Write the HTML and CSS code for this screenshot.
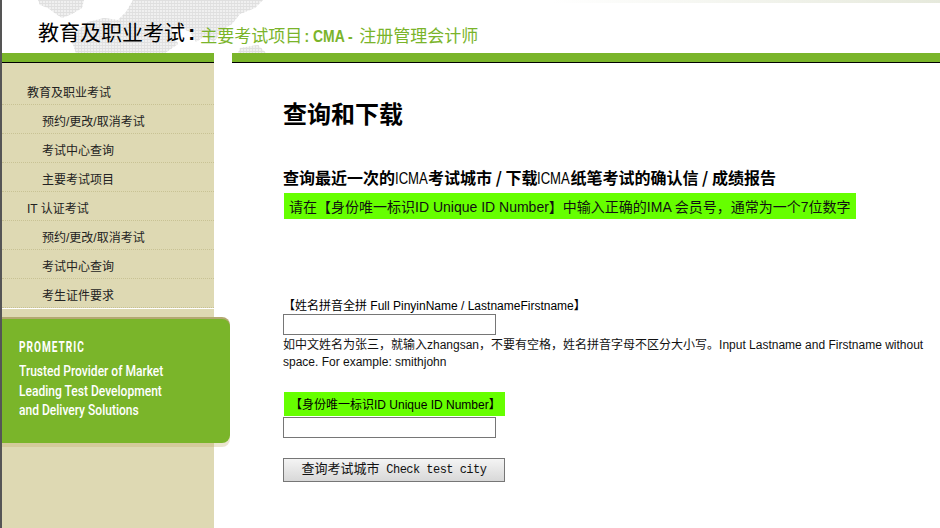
FILE: index.html
```html
<!DOCTYPE html>
<html lang="zh">
<head>
<meta charset="utf-8">
<title>查询和下载</title>
<link rel="stylesheet" href="styles.css">
</head>
<body>
<div class="page">
  <header class="header">
    <div class="map"></div>
    <div class="top-fade"></div>
    <h1 class="title"><span class="title-main">教育及职业考试</span><b class="colon">:</b><span class="subtitle">主要考试项目<span class="narrow">: CMA -</span>注册管理会计师</span></h1>
  </header>
  <div class="bars">
    <div class="bar bar-left"></div>
    <div class="bar bar-right"></div>
  </div>
  <div class="body">
    <aside class="sidebar">
      <nav class="menu">
        <a class="item">教育及职业考试</a>
        <a class="item sub">预约/更改/取消考试</a>
        <a class="item sub">考试中心查询</a>
        <a class="item sub">主要考试项目</a>
        <a class="item">IT 认证考试</a>
        <a class="item sub">预约/更改/取消考试</a>
        <a class="item sub">考试中心查询</a>
        <a class="item sub">考生证件要求</a>
      </nav>
      <div class="promo">
        <div class="promo-title">PROMETRIC</div>
        <div class="promo-text">Trusted Provider of Market<br>Leading Test Development<br>and Delivery Solutions</div>
      </div>
    </aside>
    <main class="content">
      <h2 class="heading">查询和下载</h2>
      <h3 class="subheading">查询最近一次的<span class="latin">ICMA</span>考试城市 / 下载<span class="latin">ICMA</span>纸笔考试的确认信 / 成绩报告</h3>
      <div class="notice">请在【身份唯一标识ID Unique ID Number】中输入正确的IMA 会员号，通常为一个7位数字</div>
      <form class="form">
        <label class="label" for="name">【姓名拼音全拼 Full PinyinName / LastnameFirstname】</label>
        <input class="field" id="name" type="text">
        <p class="hint">如中文姓名为张三，就输入zhangsan，不要有空格，姓名拼音字母不区分大小写。Input Lastname and Firstname without space. For example: smithjohn</p>
        <label class="label-green" for="uid">【身份唯一标识ID Unique ID Number】</label>
        <input class="field" id="uid" type="text">
        <button class="submit" type="button">查询考试城市<span class="mono"> Check test city</span></button>
      </form>
    </main>
  </div>
</div>
</body>
</html>
```
FILE: styles.css
```css
* { box-sizing: border-box; }
html, body { margin: 0; padding: 0; background: #fff; }
body { font-family: "Liberation Sans", "Noto Sans CJK TC", sans-serif; color: #000; overflow: hidden; }
.page { width: 940px; height: 528px; display: flex; flex-direction: column; overflow: hidden; border-left: 2px solid #555; }
.header { height: 53px; position: relative; padding: 16px 0 0 36px; }
.map { position: absolute; left: -2px; top: 0; width: 272px; height: 53px; background-color: #f0f0f0; background-image: linear-gradient(#dfdfdf 1px, transparent 1px), linear-gradient(90deg, #e2e2e2 1px, transparent 1px); background-size: 3px 3px; clip-path: path("M38 0H84L82 8L72 14L62 18L56 14L48 8L40 5Z M133 0H263L255 8L240 14L232 24L222 30L214 42L205 36L196 42L190 32L178 26L172 30L178 44L165 53H76L72 42L78 30L88 22L104 18L118 20L126 12Z M240 48L258 45L266 53H238Z"); }
.top-fade { position: absolute; left: 550px; right: 0; top: 0; height: 3px; background: linear-gradient(to right, #fff, #e6e9dc); }
.title { position: relative; margin: 0; font-size: 21px; line-height: 30px; font-weight: 400; white-space: nowrap; font-family: "Noto Sans CJK SC", sans-serif; display: flex; align-items: flex-start; }
.colon { font-family: "Liberation Sans", sans-serif; font-weight: 700; font-size: 22px; margin-left: 3px; margin-right: 5px; padding-top: 2px; }
.subtitle { font-size: 17px; color: #7ab42a; font-family: "Noto Sans CJK SC", sans-serif; white-space: pre; padding-top: 4px; }
.narrow { display: inline-block; width: 57px; padding-left: 3px; font-family: "Liberation Sans", sans-serif; font-weight: 700; transform: scaleX(.82); transform-origin: left center; }
.bars { display: flex; height: 10px; gap: 18px; }
.bar { background: #7ab52a; border-bottom: 1px solid #000; }
.bar-left { width: 212px; }
.bar-right { flex: 1; }
.body { display: flex; flex: 1; min-height: 0; }
.sidebar { width: 212px; flex: none; background: #ded9b3; position: relative; padding-top: 13px; }
.menu { display: flex; flex-direction: column; border-bottom: 1px solid #fff; }
.item { height: 29px; padding: 2px 0 0 25px; line-height: 31px; font-size: 12px; color: #222; border-bottom: 1px dotted #c8c294; white-space: nowrap; font-family: "Liberation Sans", "Noto Sans CJK SC", sans-serif; }
.item.sub { padding-left: 40px; }
.promo { position: absolute; left: 0; top: 256px; width: 228px; height: 124px; background: #7ab52a; border-radius: 0 8px 8px 0; padding: 19px 0 0 17px; color: #fff; font-family: Roboto, sans-serif; box-shadow: 0 -2px 0 #b3a871, 0 4px 0 rgba(190,170,100,0.3); }
.promo-title { font-size: 14px; line-height: 18px; font-weight: 700; letter-spacing: 1.4px; transform: scaleX(.72); transform-origin: left center; }
.promo-text { font-size: 14px; line-height: 19.7px; margin-top: 6px; font-weight: 500; white-space: nowrap; transform: scaleX(.86); transform-origin: left center; }
.content { flex: 1; padding: 35px 14px 0 51px; min-width: 0; margin-left: 18px; }
.heading { margin: 0; font-size: 24px; line-height: 30px; font-weight: 700; font-family: "Noto Sans CJK SC", sans-serif; }
.subheading { margin: 37px 0 0; font-size: 16px; line-height: 24px; font-weight: 700; font-family: "Noto Sans CJK SC", sans-serif; white-space: nowrap; }
.latin { display: inline-block; width: 33px; font-family: "Liberation Sans", sans-serif; font-weight: 400; transform: scaleX(.82); transform-origin: left center; }
.notice { margin: 2px 0 0 1px; width: 572px; height: 26px; line-height: 28px; padding-left: 5px; background: #66ff00; font-size: 14px; white-space: nowrap; color: #111; }
.form { display: flex; flex-direction: column; align-items: flex-start; margin-top: 78px; font-size: 12px; }
.label { line-height: 18px; height: 17px; white-space: nowrap; }
.field { width: 213px; height: 21px; border: 1px solid #767676; background: #fff; padding: 0; display: block; }
.hint { margin: 2px 0 0; line-height: 17px; font-size: 12px; width: 642px; color: #111; }
.label-green { margin-top: 21px; margin-left: 1px; width: 221px; height: 24px; line-height: 26px; background: #66ff00; padding-left: 6px; margin-bottom: 1px; white-space: nowrap; }
.submit { margin-top: 20px; width: 222px; height: 24px; border: 1px solid #767676; background: linear-gradient(#f4f4f4, #d8d8d8); padding: 0 0 2px; font-size: 13px; line-height: 18px; font-family: "Liberation Sans", "Noto Sans CJK SC", sans-serif; color: #111; white-space: pre; }
.mono { font-family: "Liberation Mono", monospace; font-size: 12px; letter-spacing: -0.53px; }
```
